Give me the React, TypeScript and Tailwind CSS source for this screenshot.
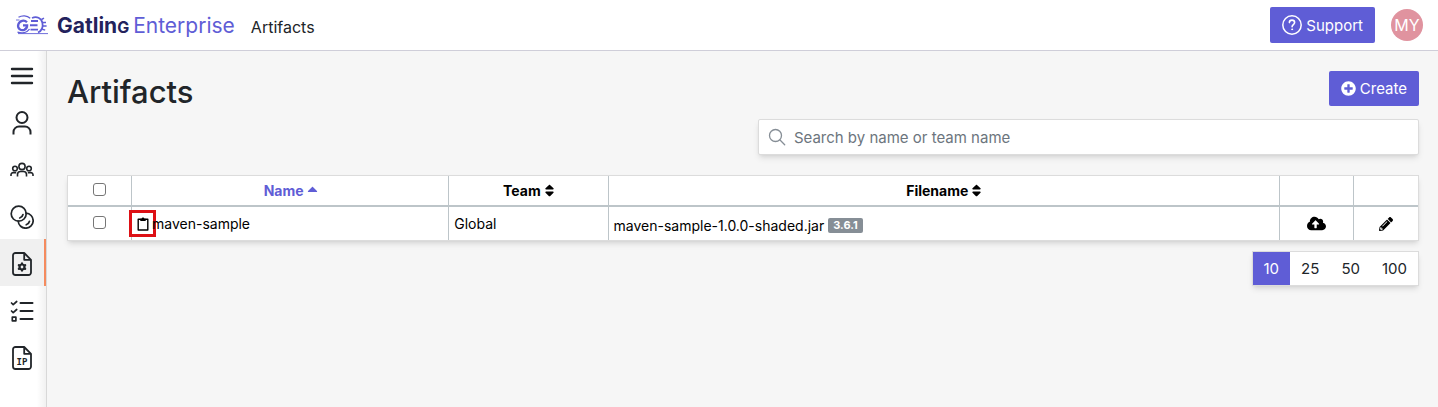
import type { ReactNode } from "react";
import { FaCaretUp, FaCloudUploadAlt, FaPencilAlt, FaPlusCircle, FaSort } from "react-icons/fa";

const stroke = {
  fill: "none",
  stroke: "currentColor",
  strokeWidth: 2,
  strokeLinecap: "round" as const,
  strokeLinejoin: "round" as const,
};

function Logo() {
  return (
    <svg width="33" height="20" viewBox="0 0 33 20" fill="none" stroke="#5f5dd6" aria-hidden="true">
      <path d="M2.500 2.300C6 .1 11 .2 14.200 3.200" strokeWidth="1.300" />
      <path d="M0 5h3.500M2 18.600h30" strokeWidth=".9" />
      <path d="M11 7.300C8.500 4.700 3.600 5.300 2.300 9.300c-1.200 4 2.600 6.700 5.900 5.600 2.200-.8 3-2.400 2.900-4.600H7" strokeWidth="2.300" />
      <path d="M15 6h7M14 10.300h7.500M14.500 14.600H22" strokeWidth="1.900" />
      <path d="M16 3c4.500-2 9.300-.2 10.400 4.900.9 4.300-1 8-4.400 9.600" strokeWidth="1.800" />
      <path d="M1.500 17.200c4.500 1.400 9.500.4 12-3" strokeWidth="1.300" />
      <path d="M25.500 4.500l2.500-1.300M26.800 7.500h3.200M27 11h3.600M26.200 14.300l3 .8" strokeWidth="1.500" />
    </svg>
  );
}

function MenuIcon() {
  return (
    <svg width="24" height="24" viewBox="0 0 24 24" {...stroke} strokeWidth={2.4}>
      <path d="M2 5h20M2 12h20M2 19h20" />
    </svg>
  );
}

function UserIcon() {
  return (
    <svg width="24" height="24" viewBox="0 0 24 24" {...stroke} strokeLinecap="butt">
      <circle cx="12" cy="6.500" r="5.500" />
      <path d="M3.500 23.500v-2.500a5.500 5.500 0 0 1 5.500-5.500h6a5.500 5.500 0 0 1 5.500 5.500v2.500" />
    </svg>
  );
}

function TeamIcon() {
  return (
    <svg width="24" height="24" viewBox="0 0 24 24" {...stroke} strokeWidth={1.6} strokeLinecap="butt">
      <circle cx="12" cy="8.500" r="3.100" />
      <circle cx="5" cy="10.500" r="2.300" />
      <circle cx="19" cy="10.500" r="2.300" />
      <path d="M7.500 18.500v-2c0-1.800 1.200-3 3-3h3c1.800 0 3 1.200 3 3v2M1 18v-1.200c0-1.300.9-2.200 2.200-2.200h3M23 18v-1.200c0-1.300-.9-2.200-2.200-2.200h-3" />
    </svg>
  );
}

function CoinsIcon() {
  return (
    <svg width="24" height="24" viewBox="0 0 24 24" {...stroke} strokeWidth={1.700}>
      <circle cx="8.700" cy="8.700" r="7.500" />
      <path d="M16 8.200A7.500 7.500 0 1 1 8.200 16.200" />
      <path d="M13 9.500c-.4 1.800-1.600 3-3.300 3.500M19.500 16.300c-.4 1.800-1.700 3-3.300 3.500" />
    </svg>
  );
}

function FileOutline() {
  return <path d="M14.200 1H5.500A2.500 2.500 0 0 0 3 3.500v17A2.500 2.500 0 0 0 5.500 23h13a2.500 2.500 0 0 0 2.500-2.500V7.800zM14.200 1v6.800H21" />;
}

function FileGearIcon() {
  return (
    <svg width="24" height="24" viewBox="0 0 24 24" {...stroke} strokeWidth={1.800}>
      <FileOutline />
      <circle cx="12" cy="15" r="2.500" strokeWidth="2.200" />
      <path d="M12 11.200v.8M12 18v.8M8.700 13.100l.8.400M14.500 16.500l.8.400M8.700 16.900l.8-.4M14.500 13.500l.8-.4" strokeWidth="2" />
    </svg>
  );
}

function ChecklistIcon() {
  return (
    <svg width="24" height="24" viewBox="0 0 24 24" {...stroke}>
      <path d="M10.500 4h12M10.500 12h12M10.500 20h12" />
      <path d="M1.500 4l1.700 1.700 3.500-3.200M1.500 12l1.700 1.700 3.500-3.200M2.300 18.200h3.600v3.600H2.300z" strokeWidth="1.700" />
    </svg>
  );
}

function FileIpIcon() {
  return (
    <svg width="24" height="24" viewBox="0 0 24 24" {...stroke} strokeWidth={1.800}>
      <FileOutline />
      <text x="12" y="19" textAnchor="middle" fill="currentColor" stroke="none" className="font-['DejaVu_Sans_Mono',monospace] text-[9px] font-bold">
        IP
      </text>
    </svg>
  );
}

function HelpIcon() {
  return (
    <svg width="20" height="20" viewBox="0 0 20 20" {...stroke} strokeWidth={1.500} aria-hidden="true">
      <circle cx="10" cy="10" r="9.200" />
      <path d="M7.400 7.600c0-1.600 1.200-2.500 2.600-2.500s2.600.9 2.600 2.400c0 2-2.500 2.100-2.500 4.200" strokeWidth="1.600" />
      <circle cx="10.100" cy="14.300" r=".5" fill="currentColor" strokeWidth="1" />
    </svg>
  );
}

function SearchIcon() {
  return (
    <svg width="18" height="18" viewBox="0 0 18 18" {...stroke} strokeWidth={1.300} aria-hidden="true">
      <circle cx="7.500" cy="7.500" r="6" />
      <path d="M12 12l4.700 4.700" />
    </svg>
  );
}

function ClipboardIcon() {
  return (
    <svg width="12" height="14" viewBox="0 0 12 14" aria-hidden="true">
      <path d="M1.200 2.300h9.600v10.700H1.200z" fill="none" stroke="currentColor" strokeWidth="1.400" strokeLinejoin="round" />
      <path d="M3.300 1.700h1.400a1.300 1.300 0 0 1 2.600 0h1.400v2.300H3.300z" fill="currentColor" />
    </svg>
  );
}

const navItems: { label: string; icon: ReactNode; active?: boolean }[] = [
  { label: "Users", icon: <UserIcon /> },
  { label: "Teams", icon: <TeamIcon /> },
  { label: "Pools", icon: <CoinsIcon /> },
  { label: "Artifacts", icon: <FileGearIcon />, active: true },
  { label: "Simulations", icon: <ChecklistIcon /> },
  { label: "Addresses", icon: <FileIpIcon /> },
];

const pageSizes = [10, 25, 50, 100];
const checkbox = "block mx-auto size-[13px] appearance-none rounded-[3px] border border-[#767676] bg-white checked:bg-[#5f5dd6]";
const headCell = "border-l border-[#bdc5c9] p-0 text-center font-bold";
const cell = "border-l border-[#bdc5c9] px-[5px] py-0";
const primaryButton = "flex items-center gap-1 rounded-xs bg-[#5f5dd6] px-3 text-[15px] text-white";

export default function App() {
  return (
    <div className="flex min-h-screen flex-col bg-[#f6f6f6] font-[Inter,sans-serif] text-[#212529]">
      <header className="flex h-[51px] items-center border-b border-[#cfced9] bg-white pr-[15px] pl-4">
        <a href="#home" className="flex items-center gap-2 whitespace-nowrap">
          <Logo />
          <span className="pt-0.5 text-[21px] leading-8 text-[#5f5dd6]">
            <span className="font-bold text-[#23225c]">
              Gatlin<span className="text-base uppercase">g</span>
            </span>
            <span className="ml-1">Enterprise</span>
          </span>
        </a>
        <span className="mt-1 ml-4 text-base">Artifacts</span>
        <div className="ml-auto flex items-center gap-4">
          <button type="button" className={`${primaryButton} h-9`}>
            <HelpIcon />
            <span className="pt-0.5">Support</span>
          </button>
          <button type="button" className="size-8 rounded-full bg-[#e0939f] text-base text-white">MY</button>
        </div>
      </header>

      <div className="flex grow">
        <nav className="w-[47px] shrink-0 border-r border-[#d8d8d8] bg-white bg-linear-to-r from-white from-80% to-[#f1f1f1]">
          <button type="button" aria-label="Menu" className="flex h-[47px] w-full items-center justify-center pt-0.5 pr-0.5">
            <MenuIcon />
          </button>
          {navItems.map((item) => (
            <a
              key={item.label}
              href="#nav"
              aria-label={item.label}
              className={
                item.active
                  ? "flex h-[47px] items-center justify-center border-r-2 border-[#f58b5e] bg-[#f0f0f0] pt-0.5"
                  : "flex h-[47px] items-center justify-center pt-0.5 pr-0.5"
              }
            >
              {item.icon}
            </a>
          ))}
        </nav>

        <main className="min-w-0 grow pt-5 pr-[19px] pl-5">
          <div className="flex items-start justify-between">
            <h1 className="pt-px text-[31px] leading-10 font-medium">Artifacts</h1>
            <button type="button" className={`${primaryButton} h-[35px]`}>
              <FaPlusCircle className="size-[15px]" />
              <span className="pt-0.5">Create</span>
            </button>
          </div>

          <label className="mt-[7px] ml-auto flex h-9 w-[48.9%] items-center gap-2 rounded-xs border border-[#dcdcdc] bg-white px-[9px] text-[#868e96] shadow-md">
            <SearchIcon />
            <input
              type="search"
              aria-label="Search"
              placeholder="Search by name or team name"
              className="min-w-0 grow bg-transparent pt-0.5 text-[15px] text-[#212529] outline-none placeholder:text-[#6c757d]"
            />
          </label>

          <div className="mt-5 border border-[#dcdcdc] bg-white text-black shadow-md">
            <table className="w-full table-fixed border-separate border-spacing-0 text-sm">
              <colgroup>
                <col className="w-[63px]" />
                <col className="w-[23.5%]" />
                <col className="w-[11.8%]" />
                <col />
                <col className="w-[74px]" />
                <col className="w-[65px]" />
              </colgroup>
              <thead>
                <tr className="h-[31px] *:border-b-2">
                  <th className="border-[#bdc5c9] p-0 pb-0.5">
                    <input type="checkbox" aria-label="Select all" className={checkbox} />
                  </th>
                  <th className={headCell} aria-sort="ascending">
                    <button type="button" className="inline-flex items-center gap-1 text-[#5f5dd6]">
                      Name <FaCaretUp className="-mx-px mb-1 h-4 w-[11px]" />
                    </button>
                  </th>
                  <th className={headCell}>
                    <button type="button" className="inline-flex items-center gap-1">
                      Team <FaSort className="-mx-px h-[15px] w-[11px]" viewBox="32 0 256 512" />
                    </button>
                  </th>
                  <th className={headCell}>
                    <button type="button" className="inline-flex items-center gap-1">
                      Filename <FaSort className="-mx-px h-[15px] w-[11px]" viewBox="32 0 256 512" />
                    </button>
                  </th>
                  <th className={headCell} aria-label="Upload" />
                  <th className={headCell} aria-label="Edit" />
                </tr>
              </thead>
              <tbody>
                <tr className="h-[33px]">
                  <td className="p-0 pb-0.5">
                    <input type="checkbox" aria-label="Select maven-sample" className={checkbox} />
                  </td>
                  <td className={cell}>
                    <div className="-ml-2 flex items-center">
                      <button type="button" aria-label="Copy identifier" className="flex h-[27px] w-[27px] items-center justify-center border-3 border-[#dd1015]">
                        <ClipboardIcon />
                      </button>
                      <span className="-ml-1">maven-sample</span>
                    </div>
                  </td>
                  <td className={cell}>Global</td>
                  <td className={cell}>
                    <div className="flex items-center gap-1 pt-1">
                      maven-sample-1.0.0-shaded.jar
                      <span className="rounded-xs bg-[#868e96] px-[5px] text-[11px] leading-[15px] font-bold text-white">3.6.1</span>
                    </div>
                  </td>
                  <td className={cell}>
                    <button type="button" aria-label="Upload" className="mx-auto block">
                      <FaCloudUploadAlt className="size-[19px]" />
                    </button>
                  </td>
                  <td className={cell}>
                    <button type="button" aria-label="Edit" className="mx-auto block">
                      <FaPencilAlt className="size-3.5" />
                    </button>
                  </td>
                </tr>
              </tbody>
            </table>
          </div>

          <div className="mt-[10px] ml-auto flex w-fit border border-[#dcdcdc] bg-white shadow-md">
            {pageSizes.map((size) => (
              <button
                key={size}
                type="button"
                className={size === 10 ? "h-[33px] bg-[#5f5dd6] px-[11px] pt-0.5 text-[15px] text-white" : "h-[33px] px-[11px] pt-0.5 text-[15px]"}
              >
                {size}
              </button>
            ))}
          </div>
        </main>
      </div>
    </div>
  );
}
